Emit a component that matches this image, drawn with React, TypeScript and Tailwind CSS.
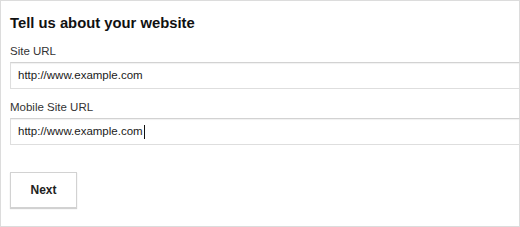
import React from "react";

const FieldBox: React.FC<{ value: string; caret?: boolean }> = ({ value, caret }) => (
  <div className="w-[510px] h-[27px] flex items-center pl-[7px] bg-white border border-[#dedede] border-t-[#d2d2d2] shadow-[inset_0_1px_1px_rgba(0,0,0,0.06)] text-[11.5px] text-[#1a1a1a]">
    <span>{value}</span>
    {caret && <span className="w-px h-[14px] bg-[#111] ml-[1px]" />}
  </div>
);

export default function App() {
  return (
    <div className="w-[520px] h-[227px] bg-white border border-[#dcdcdc] pl-[9px] pt-[12px] font-['Liberation_Sans',Arial,sans-serif]">
      {/* Heading */}
      <h1 className="text-[14.8px] leading-[20px] font-bold text-[#111]">Tell us about your website</h1>

      {/* Site URL */}
      <div className="mt-[10px] text-[11.5px] leading-[16px] text-[#333]">Site URL</div>
      <div className="mt-[3px]">
        <FieldBox value="http://www.example.com" />
      </div>

      {/* Mobile Site URL */}
      <div className="mt-[10px] text-[11.5px] leading-[16px] text-[#333]">Mobile Site URL</div>
      <div className="mt-[3px]">
        <FieldBox value="http://www.example.com" caret />
      </div>

      <button className="mt-[27px] w-[67px] h-[36px] bg-white border border-[#d2d2d2] shadow-[0_1px_1px_rgba(0,0,0,0.18)] text-[12px] font-bold text-[#222]">
        Next
      </button>
    </div>
  );
}
